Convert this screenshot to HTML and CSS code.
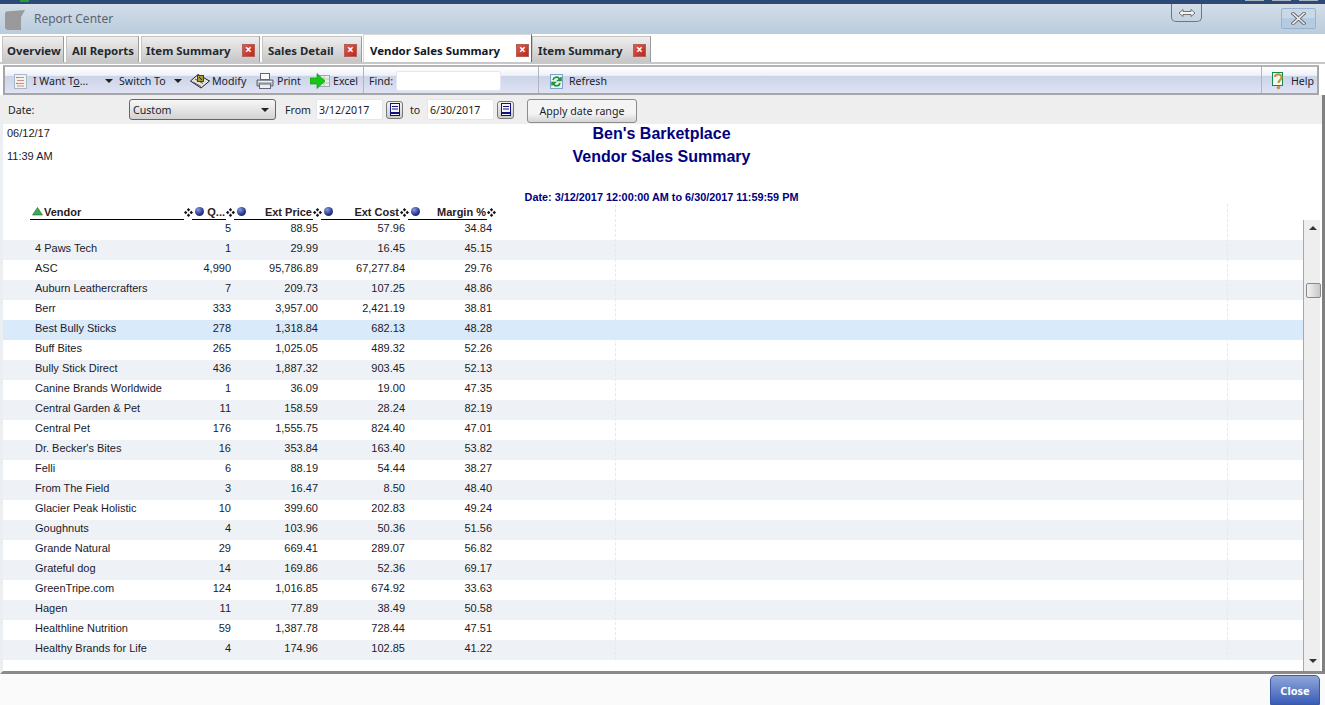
FILE: index.html
```html
<!DOCTYPE html>
<html lang="en">
<head>
<meta charset="utf-8">
<title>Report Center</title>
<link rel="stylesheet" href="styles.css">
</head>
<body>
<div class="topbar">
  <span class="top-green"></span>
  <span class="top-spacer"></span>
  <span class="win-stub"></span><span class="win-stub"></span><span class="win-stub"></span>
</div>
<header class="titlebar">
  <svg class="title-icon" width="20" height="20" viewBox="0 0 20 20"><path d="M1 1.5 L20 0 L16 7 V20 H2 L0 18 V3 Z" fill="#9a9a9a"/></svg>
  <span class="title-text">Report Center</span>
  <span class="expander"><svg width="18" height="10" viewBox="0 0 18 10"><path d="M1 5 L5 1.5 V3.5 H13 V1.5 L17 5 L13 8.5 V6.5 H5 V8.5 Z" fill="#f4f4f4" stroke="#555" stroke-width="0.8"/></svg></span>
  <button class="close-x"><svg width="15" height="13" viewBox="0 0 15 13"><path d="M2 1.5 L13 11.5 M13 1.5 L2 11.5" stroke="#666" stroke-width="3.4" stroke-linecap="square"/><path d="M2 1.5 L13 11.5 M13 1.5 L2 11.5" stroke="#e8eef4" stroke-width="1.6" stroke-linecap="square"/></svg></button>
</header>
<nav class="tabs">
  <div class="tab t-overview">Overview</div>
  <div class="tab t-all">All Reports</div>
  <div class="tab t-item">Item Summary<span class="x">×</span></div>
  <div class="tab t-sales">Sales Detail<span class="x">×</span></div>
  <div class="tab active t-vendor">Vendor Sales Summary<span class="x">×</span></div>
  <div class="tab t-item2">Item Summary<span class="x">×</span></div>
</nav>
<section class="toolbar">
  <div class="tool-group main-tools">
    <svg class="i-list" width="13" height="15" viewBox="0 0 13 15"><rect x="0.5" y="0.5" width="12" height="14" fill="#f4f0ea" stroke="#a8b8c8"/><path d="M3 3.5H10M3 6.5H10M3 9.5H10M3 12H10" stroke="#cf8f8f"/><path d="M2 3.5H4M2 9.5H4" stroke="#59a95f"/></svg>
    <span class="lbl l-want">I Want T<u>o</u>…</span>
    <span class="caret c-one"></span>
    <span class="lbl l-switch">Switch To</span>
    <span class="caret c-two"></span>
    <svg class="i-modify" width="20" height="16" viewBox="0 0 20 16"><path d="M0.5 8 L8 1.5 L19.5 8 L11 15 Z" fill="#e4e4e4" stroke="#222"/><path d="M3 9 L11 13.5 M5 6 L13 10.5" stroke="#555"/><rect x="7.5" y="2.5" width="6" height="6" fill="#a89a2c" stroke="#4a4410"/><path d="M9 4 L12 7" stroke="#222"/></svg>
    <span class="lbl l-modify">Modify</span>
    <svg class="i-print" width="18" height="16" viewBox="0 0 18 16"><rect x="4.5" y="0.5" width="9" height="6" fill="#fafafa" stroke="#667"/><path d="M1 7 H17 V13 H1 Z" fill="#b4bcc4" stroke="#667"/><rect x="3.5" y="11" width="11" height="4.5" fill="#eee" stroke="#667"/><path d="M2 8.5 H16" stroke="#eef"/></svg>
    <span class="lbl l-print">Print</span>
    <svg class="i-excel" width="20" height="16" viewBox="0 0 20 16"><rect x="8.5" y="2.5" width="11" height="11" fill="#e8efe8" stroke="#9aa"/><path d="M10 6H19M10 10H19M14 3V13" stroke="#b8c4b8"/><path d="M0 5 H7 V0.5 L15 8 L7 15.5 V11 H0 Z" fill="#14c814" stroke="#0c8c0c" stroke-width="0.6"/></svg>
    <span class="lbl l-excel">Excel</span>
  </div>
  <div class="tool-group find-tools">
    <span class="lbl">Find:</span>
    <input class="find-input" type="text" aria-label="Find">
  </div>
  <div class="tool-group refresh-tools">
    <svg width="13" height="15" viewBox="0 0 13 15"><rect x="0.5" y="0.5" width="12" height="14" fill="#e8f0fa" stroke="#7fa3c8"/><path d="M3 6 A3.5 3.5 0 0 1 9.5 5 L8 6.5 H11 V3" fill="none" stroke="#179a2a" stroke-width="1.6"/><path d="M10 9 A3.5 3.5 0 0 1 3.5 10 L5 8.5 H2 V11.5" fill="none" stroke="#179a2a" stroke-width="1.6"/></svg>
    <span class="lbl">Refresh</span>
  </div>
  <div class="tool-group help-tools">
    <svg width="12" height="19" viewBox="0 0 12 19"><rect x="0.5" y="0.5" width="10" height="13" fill="#f4f7f4" stroke="#0f8a52"/><path d="M3 5 C3 1.5 10 1.5 9.5 5.5 C9.3 8 6.5 8 6.5 11" fill="none" stroke="#c2973c" stroke-width="2.2"/><circle cx="6.5" cy="15.5" r="1.8" fill="#c2973c"/></svg>
    <span class="lbl help-lbl">Help</span>
  </div>
</section>
<section class="daterow">
  <span class="lbl date-lbl">Date:</span>
  <div class="select"><span>Custom</span><span class="caret"></span></div>
  <span class="lbl from-lbl">From</span>
  <input class="date-input" type="text" value="3/12/2017" aria-label="From">
  <button class="cal"><svg width="10" height="13" viewBox="0 0 10 13"><rect x="0.5" y="0.5" width="9" height="12" fill="#f6f6fc" stroke="#12127a"/><path d="M2 3.5H8M2 6H8" stroke="#12127a"/><path d="M1 10H9" stroke="#12127a" stroke-width="2"/></svg></button>
  <span class="lbl to-lbl">to</span>
  <input class="date-input" type="text" value="6/30/2017" aria-label="To">
  <button class="cal"><svg width="10" height="13" viewBox="0 0 10 13"><rect x="0.5" y="0.5" width="9" height="12" fill="#f6f6fc" stroke="#12127a"/><path d="M2 3.5H8M2 6H8" stroke="#12127a"/><path d="M1 10H9" stroke="#12127a" stroke-width="2"/></svg></button>
  <button class="apply">Apply date range</button>
</section>
<main class="report">
  <span class="dash d-one"></span>
  <span class="dash d-two"></span>
  <div class="report-top">
    <div class="stamp"><div>06/12/17</div><div>11:39 AM</div></div>
    <div class="titles">
      <h1>Ben's Barketplace</h1>
      <h2>Vendor Sales Summary</h2>
      <p>Date: 3/12/2017 12:00:00 AM to 6/30/2017 11:59:59 PM</p>
    </div>
    <div></div>
  </div>
  <div class="grid head">
    <div class="hc"><span class="hl first"><svg width="11" height="9" viewBox="0 0 11 9"><path d="M5.5 0.5 L10.5 8 H0.5 Z" fill="#3faa55" stroke="#1c6a30" stroke-width="0.6"/></svg>Vendor</span><svg class="handle" width="9" height="9" viewBox="0 0 9 9"><use href="#grip"/></svg></div>
    <div class="hc"><span class="hl"><i class="ball"></i><b>Q...</b></span><svg class="handle" width="9" height="9" viewBox="0 0 9 9"><use href="#grip"/></svg></div>
    <div class="hc"><span class="hl"><i class="ball"></i><b>Ext Price</b></span><svg class="handle" width="9" height="9" viewBox="0 0 9 9"><use href="#grip"/></svg></div>
    <div class="hc"><span class="hl"><i class="ball"></i><b>Ext Cost</b></span><svg class="handle" width="9" height="9" viewBox="0 0 9 9"><use href="#grip"/></svg></div>
    <div class="hc"><span class="hl"><i class="ball"></i><b>Margin %</b></span><svg class="handle" width="9" height="9" viewBox="0 0 9 9"><use href="#grip"/></svg></div>
  </div>
  <svg class="defs" width="0" height="0"><defs><g id="grip" fill="#111"><path d="M4.5 0 L6.2 1.7 L4.5 3.4 L2.8 1.7 Z"/><path d="M1.7 2.8 L3.4 4.5 L1.7 6.2 L0 4.5 Z"/><path d="M7.3 2.8 L9 4.5 L7.3 6.2 L5.6 4.5 Z"/><path d="M4.5 5.6 L6.2 7.3 L4.5 9 L2.8 7.3 Z"/></g></defs></svg>
  <div class="body-wrap">
    <div class="rows">
      <div class="grid row"><span></span><span>5</span><span>88.95</span><span>57.96</span><span>34.84</span></div>
      <div class="grid row"><span>4 Paws Tech</span><span>1</span><span>29.99</span><span>16.45</span><span>45.15</span></div>
      <div class="grid row"><span>ASC</span><span>4,990</span><span>95,786.89</span><span>67,277.84</span><span>29.76</span></div>
      <div class="grid row"><span>Auburn Leathercrafters</span><span>7</span><span>209.73</span><span>107.25</span><span>48.86</span></div>
      <div class="grid row"><span>Berr</span><span>333</span><span>3,957.00</span><span>2,421.19</span><span>38.81</span></div>
      <div class="grid row selected"><span>Best Bully Sticks</span><span>278</span><span>1,318.84</span><span>682.13</span><span>48.28</span></div>
      <div class="grid row"><span>Buff Bites</span><span>265</span><span>1,025.05</span><span>489.32</span><span>52.26</span></div>
      <div class="grid row"><span>Bully Stick Direct</span><span>436</span><span>1,887.32</span><span>903.45</span><span>52.13</span></div>
      <div class="grid row"><span>Canine Brands Worldwide</span><span>1</span><span>36.09</span><span>19.00</span><span>47.35</span></div>
      <div class="grid row"><span>Central Garden &amp; Pet</span><span>11</span><span>158.59</span><span>28.24</span><span>82.19</span></div>
      <div class="grid row"><span>Central Pet</span><span>176</span><span>1,555.75</span><span>824.40</span><span>47.01</span></div>
      <div class="grid row"><span>Dr. Becker's Bites</span><span>16</span><span>353.84</span><span>163.40</span><span>53.82</span></div>
      <div class="grid row"><span>Felli</span><span>6</span><span>88.19</span><span>54.44</span><span>38.27</span></div>
      <div class="grid row"><span>From The Field</span><span>3</span><span>16.47</span><span>8.50</span><span>48.40</span></div>
      <div class="grid row"><span>Glacier Peak Holistic</span><span>10</span><span>399.60</span><span>202.83</span><span>49.24</span></div>
      <div class="grid row"><span>Goughnuts</span><span>4</span><span>103.96</span><span>50.36</span><span>51.56</span></div>
      <div class="grid row"><span>Grande Natural</span><span>29</span><span>669.41</span><span>289.07</span><span>56.82</span></div>
      <div class="grid row"><span>Grateful dog</span><span>14</span><span>169.86</span><span>52.36</span><span>69.17</span></div>
      <div class="grid row"><span>GreenTripe.com</span><span>124</span><span>1,016.85</span><span>674.92</span><span>33.63</span></div>
      <div class="grid row"><span>Hagen</span><span>11</span><span>77.89</span><span>38.49</span><span>50.58</span></div>
      <div class="grid row"><span>Healthline Nutrition</span><span>59</span><span>1,387.78</span><span>728.44</span><span>47.51</span></div>
      <div class="grid row"><span>Healthy Brands for Life</span><span>4</span><span>174.96</span><span>102.85</span><span>41.22</span></div>
    </div>
    <div class="scrollbar">
      <span class="sb-up"></span>
      <span class="sb-thumb"></span>
      <span class="sb-down"></span>
    </div>
  </div>
</main>
<footer class="footer"><button class="close-btn">Close</button></footer>
</body>
</html>
```
FILE: styles.css
```css
* { box-sizing: border-box; }
html, body { margin: 0; height: 705px; overflow: hidden; }
body {
  width: 1325px;
  display: flex;
  flex-direction: column;
  background: #fff;
  font-family: "Noto Sans", "DejaVu Sans", sans-serif;
  font-size: 10.6px;
  color: #1c1c2c;
}
button, input { font: inherit; color: inherit; margin: 0; }
.defs { position: absolute; }

.topbar {
  height: 5px;
  flex: none;
  display: flex;
  background: #2b4a78;
  border-bottom: 1px solid #d8dde2;
  padding-right: 7px;
}
.top-green { width: 9px; height: 2px; margin-left: 20px; background: #2f9a3a; }
.top-spacer { flex: 1; }
.win-stub { width: 19px; height: 1px; margin-left: 8px; background: #aab4c0; }

.titlebar {
  height: 29px;
  flex: none;
  display: flex;
  align-items: center;
  padding-left: 5px;
  background: linear-gradient(#d2dde8, #b9ccdd);
}
.title-icon { flex: none; }
.title-text { margin: -2px 0 0 9px; font-size: 12px; color: #5a6470; width: 1137px; }
.expander {
  width: 31px;
  height: 18px;
  margin-top: -13px;
  border: 1px solid #6e7680;
  border-top: 0;
  border-radius: 0 0 5px 5px;
  display: flex;
  align-items: center;
  justify-content: center;
  flex: none;
}
.close-x {
  width: 35px;
  height: 21px;
  margin-left: 79px;
  margin-top: -3px;
  padding: 0;
  flex: none;
  border: 1px solid #9ab2cc;
  border-radius: 2px;
  background: linear-gradient(#c8d8e6 50%, #b4cce2 50%);
  display: flex;
  align-items: center;
  justify-content: center;
}

.tabs {
  height: 30px;
  flex: none;
  display: flex;
  align-items: flex-end;
  padding: 0 3px 0 2px;
  background: #fff;
  border-bottom: 2px solid #c8c8c8;
}
.tab {
  height: 26px;
  margin-right: 2px;
  padding: 2px 0 0 5px;
  display: flex;
  align-items: center;
  position: relative;
  font-weight: 700;
  font-size: 11.4px;
  color: #222a30;
  border: 1px solid #c4c4c4;
  border-bottom: 0;
  border-right: 1px solid #9a9a9a;
  background: linear-gradient(#eeeeee, #c6c6c6);
  flex: none;
}
.tab.active {
  background: #fff;
  height: 28px;
  padding: 4px 0 0 6px;
  color: #101828;
  margin-right: 0;
  border-color: #d8d8d8 #666 #fff #d8d8d8;
}
.t-overview { width: 62px; padding-left: 4px; }
.t-all { width: 73px; }
.t-item { width: 119px; padding-left: 4px; }
.t-item2 { width: 119px; }
.t-sales { width: 100px; margin-right: 1px; }
.t-vendor { width: 169px; }
.x {
  position: absolute;
  right: 4px;
  top: 7px;
  width: 13px;
  height: 13px;
  background: linear-gradient(135deg, #e05a4c, #b8281e);
  border: 1px solid #b06058;
  color: #fff;
  font-size: 12px;
  line-height: 10px;
  text-align: center;
}
.active .x { right: 2px; top: 9px; }

.toolbar {
  height: 30px;
  flex: none;
  margin: 1px 6px 0 3px;
  display: flex;
  align-items: stretch;
  border: 2px solid #a6a6a6;
  border-top-color: #b4b4b4;
  background: linear-gradient(#ffffff, #eef1f8 32%, #ccd4e8 36%, #dfe3f4);
}
.tool-group { display: flex; align-items: center; flex: none; padding-top: 2px; }
.lbl { color: #1c1c2c; white-space: nowrap; }
.main-tools { width: 359px; padding-left: 9px; border-right: 1px solid #b0b4be; }
.l-want { margin-left: 6px; width: 72px; }
.caret {
  width: 0;
  height: 0;
  border-left: 4px solid transparent;
  border-right: 4px solid transparent;
  border-top: 4px solid #222;
  flex: none;
}
.c-one { margin-right: 6px; }
.l-switch { width: 55px; }
.i-modify { margin-left: 8px; flex: none; }
.l-modify { margin-left: 2px; width: 44px; }
.i-print { flex: none; }
.l-print { margin-left: 3px; width: 29px; }
.i-excel { flex: none; margin-left: 4px; }
.l-excel { margin-left: 3px; }
.find-tools { width: 175px; padding-left: 5px; border-right: 1px solid #b0b4be; }
.find-input { width: 105px; height: 20px; margin-left: 3px; border: 1px solid #e4e6f0; border-radius: 2px; background: #fff; padding: 0; }
.refresh-tools { width: 723px; padding-left: 11px; border-right: 1px solid #b0b4be; }
.refresh-tools .lbl { margin-left: 6px; }
.help-tools { flex: 1; padding-left: 10px; }
.help-lbl { margin-left: 7px; }

.daterow {
  height: 29px;
  flex: none;
  display: flex;
  align-items: center;
  padding-left: 8px;
  background: #eeeeee;
  border-right: 3px solid #808080;
}
.date-lbl { width: 121px; }
.select {
  width: 147px;
  height: 21px;
  padding: 0 6px 0 3px;
  display: flex;
  align-items: center;
  justify-content: space-between;
  border: 1px solid #666;
  border-radius: 3px;
  background: linear-gradient(#f8f8f8, #d2d2d2);
}
.from-lbl { margin-left: 9px; width: 31px; }
.date-input { width: 67px; height: 21px; border: 1px solid #e6e6e6; border-radius: 2px; background: #fff; padding: 0 0 0 2px; }
.cal {
  width: 17px;
  height: 18px;
  margin-left: 3px;
  padding: 0;
  border: 1px solid #777;
  border-radius: 3px;
  background: linear-gradient(#f4f4f4, #cccccc);
  display: flex;
  align-items: center;
  justify-content: center;
}
.to-lbl { margin-left: 7px; width: 17px; }
.apply {
  width: 110px;
  height: 24px;
  margin-left: 13px;
  margin-top: 2px;
  padding: 0;
  border: 1px solid #8c8c8c;
  border-radius: 3px;
  background: linear-gradient(#f4f4f4 60%, #d4d4d4);
}

.report {
  flex: 1;
  min-height: 0;
  display: flex;
  flex-direction: column;
  position: relative;
  font-family: "Liberation Sans", Arial, sans-serif;
  font-size: 11px;
  color: #1a1a2a;
  border-left: 3px solid #eceff1;
  border-right: 3px solid #808080;
  border-bottom: 3px solid #8a8a8a;
}
.dash { position: absolute; top: 80px; height: 456px; width: 0; border-left: 1px dashed #e8e8e8; }
.d-one { left: 612px; }
.d-two { left: 1224px; }
.report-top {
  height: 80px;
  flex: none;
  display: grid;
  grid-template-columns: 1fr auto 1fr;
}
.stamp { padding: 3px 0 0 4px; }
.stamp div { height: 23px; line-height: 13px; }
.titles { text-align: center; color: #000080; margin-right: 2px; }
.titles h1, .titles h2 { margin: 0; font-size: 16px; line-height: 23px; font-weight: 700; }
.titles h1 { margin-top: -2px; }
.titles p { margin: 23px 0 0; font-size: 10.85px; line-height: 13px; font-weight: 700; }

.grid {
  display: grid;
  grid-template-columns: 162px 42px 87px 87px 87px;
  padding-left: 27px;
}
.head { height: 16px; flex: none; position: relative; }
.hc { display: flex; align-items: center; min-width: 0; }
.hl {
  flex: 1;
  min-width: 0;
  height: 16px;
  display: flex;
  align-items: center;
  justify-content: flex-end;
  border-bottom: 1px solid #000;
  padding-right: 1px;
  font-weight: 700;
  color: #2a2020;
}
.hl b { font-weight: 700; margin-left: auto; }
.hl.first { justify-content: flex-start; padding-left: 2px; gap: 1px; }
.ball {
  width: 9px;
  height: 9px;
  margin-left: 3px;
  border-radius: 50%;
  flex: none;
  background: radial-gradient(circle at 35% 30%, #8c9ad8, #24348c 60%, #141e5a);
}
.handle { flex: none; margin: 0 -0.5px; }

.body-wrap { flex: 1; min-height: 0; display: flex; }
.rows { flex: 1; min-width: 0; overflow: hidden; }
.row { height: 20px; line-height: 16px; }
.row:nth-child(even) { background: #eef2f6; }
.row.selected { background: #d9eafb; }
.row span { text-align: right; padding-right: 3px; white-space: nowrap; }
.row span:first-child { text-align: left; padding-left: 5px; }
.scrollbar {
  width: 17px;
  flex: none;
  margin-right: 2px;
  display: flex;
  flex-direction: column;
  align-items: center;
  background: #eeeeee;
  border-left: 1px solid #a8a8a8;
  position: relative;
}
.sb-up, .sb-down {
  position: absolute;
  left: 5px;
  width: 0;
  height: 0;
  border-left: 4px solid transparent;
  border-right: 4px solid transparent;
}
.sb-up { top: 6px; border-bottom: 4px solid #333; }
.sb-down { bottom: 8px; border-top: 4px solid #333; }
.sb-thumb {
  position: absolute;
  top: 63px;
  left: 2px;
  width: 15px;
  height: 15px;
  border: 1px solid #888;
  border-radius: 2px;
  background: linear-gradient(90deg, #f2f2f2, #c8c8c8);
}

.footer {
  height: 31px;
  flex: none;
  display: flex;
  justify-content: flex-end;
  align-items: flex-start;
  padding: 1px 5px 0 0;
  background: #fafafa;
}
.close-btn {
  width: 50px;
  height: 30px;
  padding: 0;
  border: 1px solid #3a5aa8;
  border-radius: 5px 5px 0 0;
  background: linear-gradient(#8fa8d8, #3a5cb8);
  color: #fff;
  font-weight: 700;
  font-size: 11px;
}
```
